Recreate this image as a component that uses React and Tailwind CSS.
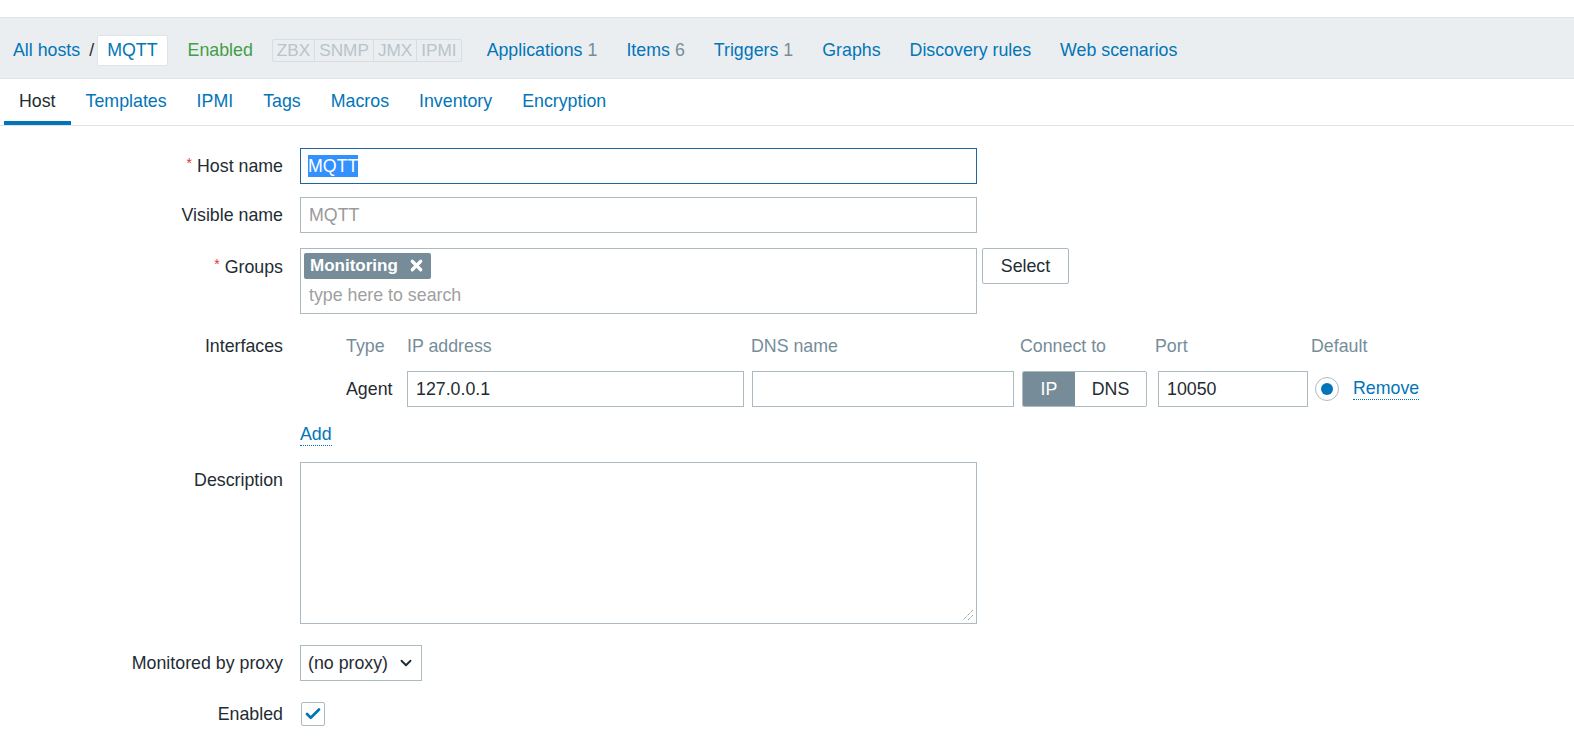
import { ChevronDown, Check, X } from "lucide-react";

const navLinks = [
  { label: "Applications", count: 1 },
  { label: "Items", count: 6 },
  { label: "Triggers", count: 1 },
  { label: "Graphs" },
  { label: "Discovery rules" },
  { label: "Web scenarios" },
];

const tabs = ["Host", "Templates", "IPMI", "Tags", "Macros", "Inventory", "Encryption"];

function Label({ required, children, className = "" }) {
  return (
    <div className={`w-[300px] shrink-0 pr-[17px] text-right text-[#1f2c33] ${className}`}>
      {required && <span className="text-[#e33734] text-[14px] align-top mr-[5px]">*</span>}
      {children}
    </div>
  );
}

export default function App() {
  return (
    <div
      className="w-[1574px] h-[738px] overflow-hidden bg-white text-[17.8px] text-[#1f2c33]"
      style={{ fontFamily: "Arial, 'Liberation Sans', sans-serif" }}
    >
      <div className="h-[17px]" />

      {/* host navigation */}
      <div className="h-[62px] bg-[#ebeef0] border-y border-[#dfe4e7] flex items-center pl-[13px] pt-[5px]">
        <a className="text-[#0275b8]">All hosts</a>
        <span className="ml-[9px] mr-[3px] text-[#1f2c33]">/</span>
        <span className="h-[31px] px-[9px] flex items-center bg-white border border-[#dfe4e7] rounded-[2px] text-[#0275b8]">
          MQTT
        </span>
        <span className="ml-[20px] text-[#429e47]">Enabled</span>
        <div className="ml-[19px] h-[23px] flex border border-[#d7dde0] rounded-[2px] text-[#b8c4ca] text-[17.2px] leading-[21px]">
          <span className="px-[4px]">ZBX</span>
          <span className="px-[4px] border-l border-[#d7dde0]">SNMP</span>
          <span className="px-[4px] border-l border-[#d7dde0]">JMX</span>
          <span className="px-[4px] border-l border-[#d7dde0]">IPMI</span>
        </div>
        <div className="ml-[25px] flex gap-[29px]">
          {navLinks.map((l) => (
            <a key={l.label} className="text-[#0275b8]">
              {l.label}
              {l.count !== undefined && <span className="text-[#768d99] ml-[5px]">{l.count}</span>}
            </a>
          ))}
        </div>
      </div>

      {/* tabs */}
      <div className="h-[47px] border-b border-[#dfe4e7] flex pl-[4px]">
        {tabs.map((t, i) => (
          <div
            key={t}
            className={`px-[15px] flex items-center ${
              i === 0 ? "text-[#1f2c33] border-b-[4px] border-[#0275b8] pt-[2px]" : "text-[#0275b8] pb-[2px]"
            }`}
          >
            {t}
          </div>
        ))}
      </div>

      {/* form */}
      <div className="pt-[22px] flex flex-col">
        <div className="flex items-center h-[36px]">
          <Label required>Host name</Label>
          <div className="w-[677px] h-[36px] border border-[#1f65a0] flex items-center px-[7px]">
            <span className="bg-[#3390ff] text-white leading-[22px]">MQTT</span>
          </div>
        </div>

        <div className="flex items-center h-[36px] mt-[13px]">
          <Label>Visible name</Label>
          <div className="w-[677px] h-[36px] border border-[#acbbc2] flex items-center px-[8px] text-[#9a9a9a]">
            MQTT
          </div>
        </div>

        <div className="flex mt-[15px]">
          <Label required className="pt-[6px]">Groups</Label>
          <div className="w-[677px] h-[66px] border border-[#acbbc2] px-[3px] pt-[3px]">
            <span className="inline-flex items-center h-[26px] bg-[#768d99] text-white font-bold rounded-[2px] px-[6px] gap-[10px] text-[17px]">
              Monitoring
              <X size={17} strokeWidth={4.5} />
            </span>
            <div className="text-[#a0a0a0] pl-[5px] mt-[3px]">type here to search</div>
          </div>
          <button className="ml-[5px] h-[36px] w-[87px] border border-[#acbbc2] rounded-[2px] bg-white text-[#1f2c33]">
            Select
          </button>
        </div>

        <div className="flex mt-[19px]">
          <Label>Interfaces</Label>
          <div className="flex flex-col pl-[46px]">
            <div className="flex text-[#768d99] h-[24px]">
              <span className="w-[61px]">Type</span>
              <span className="w-[344px]">IP address</span>
              <span className="w-[269px]">DNS name</span>
              <span className="w-[135px]">Connect to</span>
              <span className="w-[156px]">Port</span>
              <span>Default</span>
            </div>
            <div className="flex items-center mt-[14px] h-[36px]">
              <span className="w-[61px]">Agent</span>
              <div className="w-[337px] h-[36px] border border-[#acbbc2] flex items-center px-[8px]">127.0.0.1</div>
              <div className="ml-[8px] w-[262px] h-[36px] border border-[#acbbc2]" />
              <div className="ml-[8px] w-[125px] h-[36px] flex border border-[#acbbc2] rounded-[2px] overflow-hidden">
                <span className="w-[52px] bg-[#768d99] text-white flex items-center justify-center">IP</span>
                <span className="flex-1 flex items-center justify-center">DNS</span>
              </div>
              <div className="ml-[11px] w-[150px] h-[36px] border border-[#acbbc2] flex items-center px-[8px]">10050</div>
              <div className="ml-[7px] w-[24px] h-[24px] rounded-full border border-[#acbbc2] flex items-center justify-center">
                <span className="w-[12px] h-[12px] rounded-full bg-[#0275b8]" />
              </div>
              <a className="ml-[14px] text-[#0275b8] border-b border-dotted border-[#0275b8] leading-[21px]">Remove</a>
            </div>
          </div>
        </div>

        <div className="flex mt-[17px]">
          <div className="w-[300px] shrink-0" />
          <a className="text-[#0275b8] border-b border-dotted border-[#0275b8] leading-[21px]">Add</a>
        </div>

        <div className="flex mt-[16px]">
          <Label className="pt-[5px]">Description</Label>
          <div className="relative w-[677px] h-[162px] border border-[#acbbc2]">
            <svg className="absolute right-[2px] bottom-[2px]" width="12" height="12" viewBox="0 0 12 12">
              <line x1="11" y1="1" x2="1" y2="11" stroke="#777" strokeWidth="1" strokeDasharray="1 1" />
              <line x1="11" y1="6" x2="6" y2="11" stroke="#777" strokeWidth="1" strokeDasharray="1 1" />
            </svg>
          </div>
        </div>

        <div className="flex items-center mt-[21px] h-[36px]">
          <Label>Monitored by proxy</Label>
          <div className="h-[36px] w-[122px] border border-[#acbbc2] flex items-center justify-between pl-[7px] pr-[6px]">
            <span>(no proxy)</span>
            <ChevronDown size={18} strokeWidth={2.5} />
          </div>
        </div>

        <div className="flex items-center mt-[21px] h-[24px]">
          <Label>Enabled</Label>
          <div className="ml-[1px] w-[24px] h-[24px] border border-[#acbbc2] rounded-[2px] flex items-center justify-center">
            <Check size={18} strokeWidth={3.6} className="text-[#0275b8]" />
          </div>
        </div>
      </div>
    </div>
  );
}
